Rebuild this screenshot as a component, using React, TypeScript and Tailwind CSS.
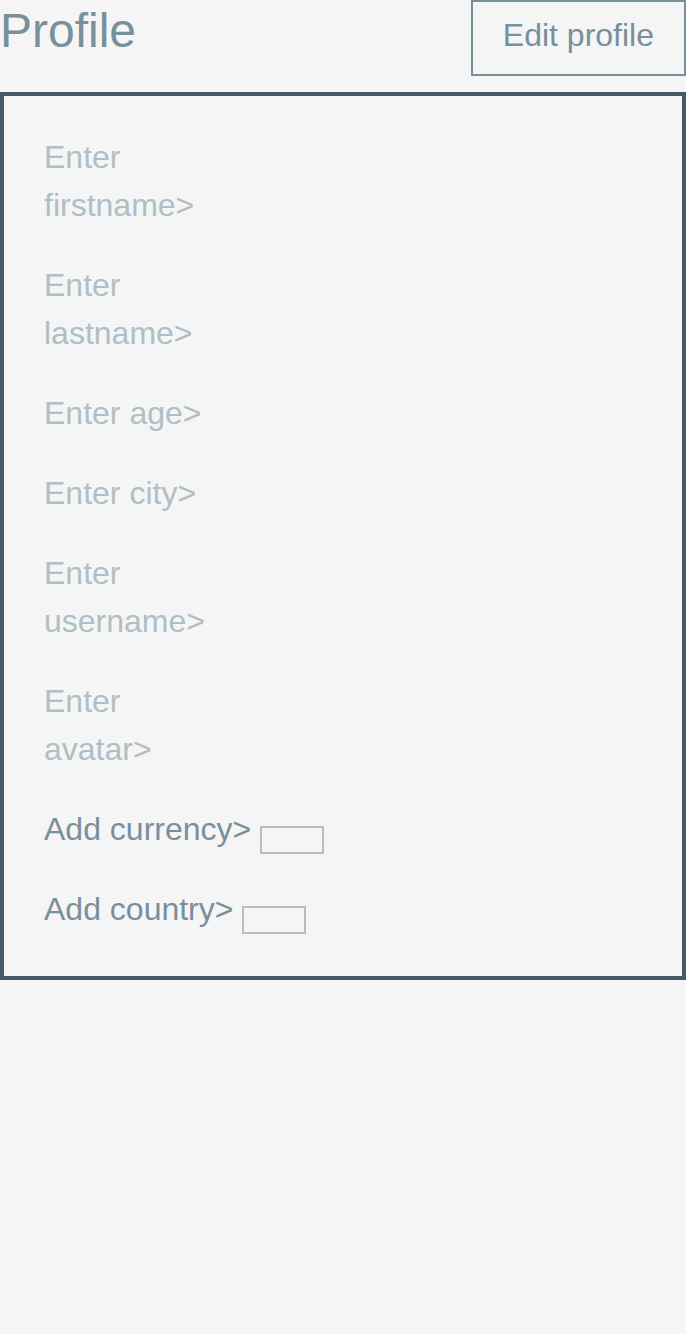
import React from "react"

const fields = [
  "Enter firstname>",
  "Enter lastname>",
  "Enter age>",
  "Enter city>",
  "Enter username>",
  "Enter avatar>",
]

const pickers = ["Add currency>", "Add country>"]

export default function App() {
  return (
    <div
      className="min-h-screen bg-[#f5f5f5]"
      style={{ fontFamily: '"Liberation Sans", Arial, sans-serif' }}
    >
      {/* header */}
      <div className="flex items-start justify-between">
        <h1 className="text-[48px] leading-[62px] text-[#78909c]">Profile</h1>
        <button className="border-2 border-[#78909c] px-[30px] pt-[9px] pb-[15px] text-[32px] leading-[48px] text-[#78909c]">
          Edit profile
        </button>
      </div>

      {/* form */}
      <div className="mt-4 border-4 border-[#455a64] pl-10 pt-[37px] pb-[43px]">
        <div className="flex flex-col gap-8">
          {fields.map((f) => (
            <div
              key={f}
              className="w-[170px] text-[32px] leading-[48px] text-[#b0bec5]"
            >
              {f}
            </div>
          ))}
          {pickers.map((p) => (
            <div key={p} className="flex h-12 items-start">
              <span className="text-[32px] leading-[48px] text-[#78909c]">{p}</span>
              <div className="ml-[9px] mt-[21px] h-[28px] w-[64px] shrink-0 border-2 border-[#b0bec5]" />
            </div>
          ))}
        </div>
      </div>
    </div>
  )
}
